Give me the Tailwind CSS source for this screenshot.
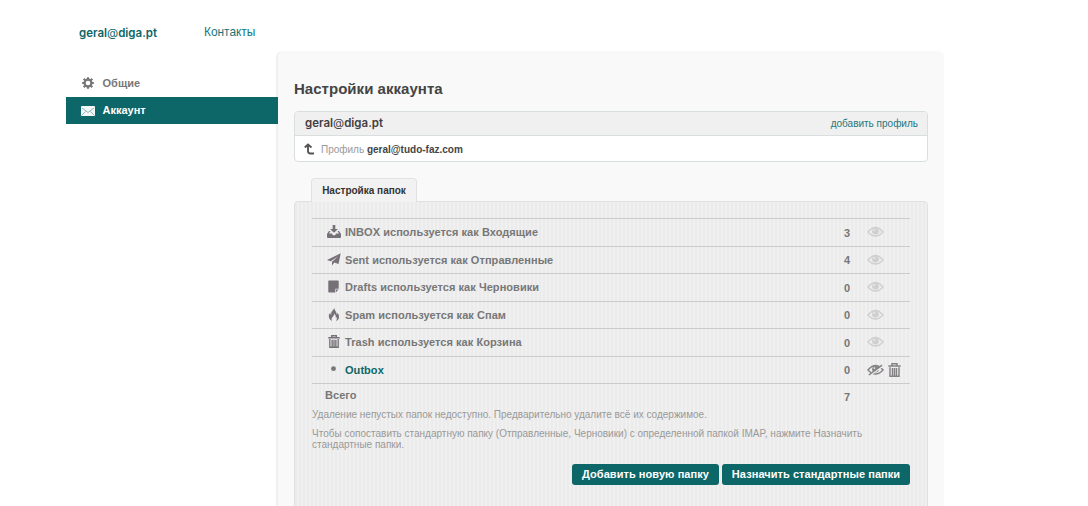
<!DOCTYPE html>
<html lang="ru"><head><meta charset="utf-8"><title>Настройки аккаунта</title>
<script src="https://cdn.jsdelivr.net/npm/@tailwindcss/browser@4"></script></head>
<body class="bg-white h-[506px] overflow-hidden font-['Liberation_Sans',Arial,sans-serif] text-[#777]">
<svg class="hidden">
<symbol id="eye" viewBox="0 0 18 12"><path d="M1 6Q9-3.600 17 6Q9 14.600 1 6Z" fill="none" stroke="currentColor" stroke-width="1.500"/><circle cx="9" cy="5.200" r="3.500" fill="currentColor"/><circle cx="7.800" cy="4" r="1" fill="#eee"/></symbol>
<symbol id="trash" viewBox="0 0 13 14"><path d="M4 2.500V.8h5v1.700M.3 3h12.400" fill="none" stroke="currentColor" stroke-width="1.500"/><path d="M2 4.200v9h9v-9M4.500 5v7.500M6.500 5v7.500M8.500 5v7.500" fill="none" stroke="currentColor" stroke-width="1.450"/></symbol>
</svg>
<header class="h-[51px] pl-[79px] pt-[24px] flex text-[#0d6668]">
<b class="w-[125px] text-[11.5px] leading-[18px] font-['Inter',sans-serif] font-semibold">geral<span class="font-normal">@</span>diga.pt</b>
<a class="text-[11.900px] leading-[16px] text-[#16757a]">Контакты</a></header>
<div class="flex pl-[66px]">
<nav class="w-[210px] pt-[19px] text-[11px] font-bold">
<div class="h-[27px] pl-[16px] flex items-center gap-2"><svg class="w-[12px] h-[12px] -mt-0.5" viewBox="0 0 14 14"><circle cx="7" cy="7" r="4" fill="none" stroke="#777" stroke-width="2.600"/><path d="M7 .2v2.400M7 11.400v2.400M.2 7h2.400M11.400 7h2.400M2 2l2 2M10 10l2 2M2 12l2-2M10 4l2-2" stroke="#777" stroke-width="2.600"/></svg><span class="ml-[.5px] tracking-[.05px]">Общие</span></div>
<div class="h-[27px] w-[212px] pl-[15px] flex items-center gap-[8px] bg-[#0d6668] text-white relative z-10"><svg class="w-[14px] h-[10px]" viewBox="0 0 14 10"><rect width="14" height="10" rx=".8" fill="#f4f7f7"/><path d="m1 2 6 4.500L13 2M1 9l3.500-3.500M13 9 9.500 5.500" fill="none" stroke="#75a4a7" stroke-width=".8"/></svg><span class="-ml-[.5px]">Аккаунт</span></div>
</nav>
<main class="w-[668px] h-[470px] pl-4 pr-4 pt-[27px] bg-[#f9f9f9] border-l-2 border-[#f0f0f0] rounded-t-md">
<h1 class="text-[15px] leading-[22px] font-bold text-[#444] tracking-[.03px]">Настройки аккаунта</h1>
<section class="mt-[11px] w-[634px] h-[51px] border border-[#d9dedf] rounded bg-white overflow-hidden">
<div class="h-[24px] pl-[10px] pr-[9px] bg-[#f0f0f0] border-b border-[#d9dedf] flex items-center justify-between"><b class="text-[11.5px] text-[#443e42] font-['Inter',sans-serif] font-semibold">geral<span class="font-normal">@</span>diga.pt</b><a class="text-[10px] text-[#23777c]">добавить профиль</a></div>
<div class="h-[26px] pl-[9px] flex items-center text-[10px]"><svg class="w-[11px] h-[12px] mr-[6px]" viewBox="0 0 11 12"><path d="M4 1.500V8Q4 10.500 6.500 10.500H10M.8 4.500 4 1.500l3.500 3" fill="none" stroke="#555" stroke-width="1.900"/></svg><span class="text-[#999]">Профиль <b class="text-[#444]">geral@tudo-faz.com</b></span></div>
</section>
<div class="mt-[16px] ml-[17px] w-[106px] h-[24px] border border-b-0 border-[#e1e3e3] rounded-t bg-[#f2f2f2] flex justify-center items-center text-[10px] font-bold text-[#333] relative z-10">Настройка папок</div>
<section class="-mt-px w-[634px] h-[320px] border border-[#dfe1e1] rounded-t pl-[17px] pr-[17px] pt-[16px] bg-[repeating-linear-gradient(90deg,#ebebeb_0_2px,#f0f0f0_2px_4px)]">
<ul class="text-[11px] font-bold tracking-[.05px]">
<li class="h-[27.5px] border-t border-[#cccccc] flex items-center pl-[15px]"><svg class="w-[14px] h-[13px] mr-1 -mt-0.5" viewBox="0 0 14 13" fill="#757176"><path d="M5.700 0h2.600v4H11L7 7.800 3 4h2.700z"/><path d="M2 6h1.500L2 8.500h2.800L6 10.300h2l1.200-1.800H12L10.500 6H12l2 3v3q0 1-1 1H1q-1 0-1-1V9z"/></svg><span class="flex-1">INBOX используется как Входящие</span><span class="w-[23px] pt-px">3</span><span class="w-[43px] text-[#cfcfcf]"><svg class="w-[17px] h-[12px]"><use href="#eye"/></svg></span></li>
<li class="h-[27.5px] border-t border-[#cccccc] flex items-center pl-[15px]"><svg class="w-[14px] h-[13px] mr-1" viewBox="0 0 14 13" fill="#757176"><path d="M13.700.3 11.500 11 7.300 9.500 5 12.500V8.800L11 3.500 3.700 8.300 0 7z"/></svg><span class="flex-1">Sent используется как Отправленные</span><span class="w-[23px] pt-px">4</span><span class="w-[43px] text-[#cfcfcf]"><svg class="w-[17px] h-[12px]"><use href="#eye"/></svg></span></li>
<li class="h-[27.5px] border-t border-[#cccccc] flex items-center pl-[15px]"><svg class="w-[14px] h-[13px] mr-1 -mt-0.5" viewBox="0 0 14 13" fill="#757176"><path d="M2 .5h9q.7 0 .7.7v7.500H8.300v3.800H2q-.7 0-.7-.7V1.200q0-.7.7-.7zM9 9.500h2.600L9 12.300z"/></svg><span class="flex-1">Drafts используется как Черновики</span><span class="w-[23px] pt-px">0</span><span class="w-[43px] text-[#cfcfcf]"><svg class="w-[17px] h-[12px]"><use href="#eye"/></svg></span></li>
<li class="h-[27.5px] border-t border-[#cccccc] flex items-center pl-[15px]"><svg class="w-[14px] h-[13px] mr-1" viewBox="0 0 14 13" fill="#757176"><path d="M7.500 0Q6 2 4.800 3.500 3.500 5 4.500 7 3 6.300 3.300 4.500 1 7 2 9.700 2.700 12 5 13 3.700 10.500 6 8.500 7.500 7 7.300 5.500 9.500 8 8.500 9.500 10 9 9.200 8 10.500 10.500 9 13q3.300-1.200 3-4.500Q11.700 6.500 10.500 4.500 10.500 6 9.500 6.500 9.800 4.500 8.500 3 7.300 1.700 7.500 0Z"/></svg><span class="flex-1">Spam используется как Спам</span><span class="w-[23px] pt-px">0</span><span class="w-[43px] text-[#cfcfcf]"><svg class="w-[17px] h-[12px]"><use href="#eye"/></svg></span></li>
<li class="h-[27.5px] border-t border-[#cccccc] flex items-center pl-[15px]"><svg class="w-[14px] h-[13px] mr-1 -mt-0.5 text-[#757176]"><use href="#trash"/></svg><span class="flex-1">Trash используется как Корзина</span><span class="w-[23px] pt-px">0</span><span class="w-[43px] text-[#cfcfcf]"><svg class="w-[17px] h-[12px]"><use href="#eye"/></svg></span></li>
<li class="h-[27.5px] border-t border-[#cccccc] flex items-center pl-[15px]"><svg class="w-[14px] h-[13px] mr-1" viewBox="0 0 14 13" fill="#777"><circle cx="6.500" cy="5.700" r="2.400"/></svg><span class="flex-1 text-[#0d6668]">Outbox</span><span class="w-[23px] pt-px">0</span><span class="w-[43px] flex gap-[4px] items-center text-[#858285]"><svg class="w-[17px] h-[12px]" viewBox="0 0 18 12"><use href="#eye" width="18" height="12"/><path d="M2.500 12 17 1.500" stroke="#eee" stroke-width="2"/><path d="M2 11.300 16 .8" stroke="currentColor" stroke-width="1.500"/></svg><svg class="w-[13px] h-[14px]"><use href="#trash"/></svg></span></li>
<li class="h-[25px] border-t border-[#cccccc] flex items-center pl-[13px]"><span class="flex-1 pb-[2px]">Всего</span><span class="w-[66px] pt-[3px]">7</span></li>
</ul>
<p class="mt-px text-[10px] leading-[12px] text-[#999]">Удаление непустых папок недоступно. Предварительно удалите всё их содержимое.</p>
<p class="mt-[7px] w-[570px] text-[10px] leading-[11px] text-[#999]">Чтобы сопоставить стандартную папку (Отправленные, Черновики) с определенной папкой IMAP, нажмите Назначить стандартные папки.</p>
<div class="mt-[14px] flex justify-end gap-[3px] text-[11px] font-bold text-white tracking-[.06px]"><button class="h-[21px] w-[147px] rounded-[3px] bg-[#0d6668]">Добавить новую папку</button><button class="h-[21px] w-[188px] rounded-[3px] bg-[#0d6668]">Назначить стандартные папки</button></div>
</section></main></div>
</body></html>
